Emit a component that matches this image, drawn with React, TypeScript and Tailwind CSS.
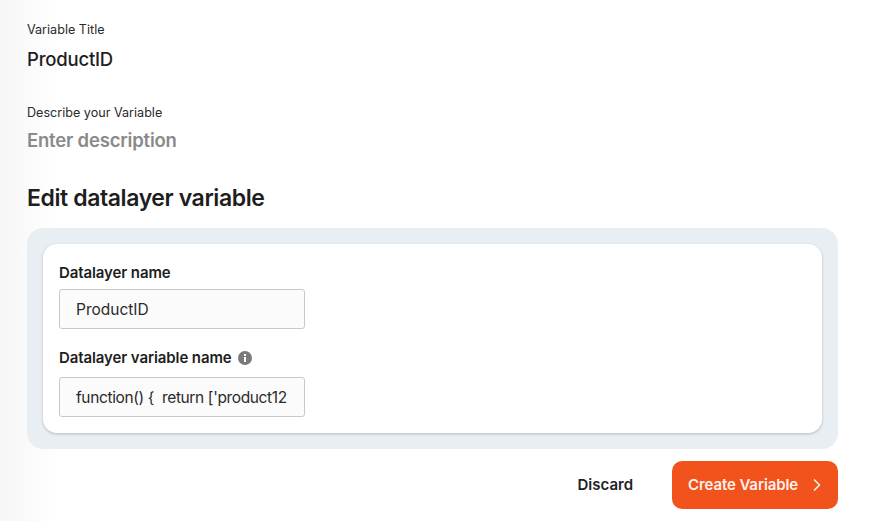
import { ChevronRight } from "lucide-react";

const App = () => {
  return (
    <div className="h-[521px] w-[882px] overflow-hidden bg-linear-to-r from-[#f6f6f6] to-white to-[60px] pl-[27px] pr-[44px] pt-[21px] font-['Inter',sans-serif] text-[#1e1e1e]">
      <p className="h-[17px] text-[12.6px] leading-[17px] text-[#2a2a2a]">Variable Title</p>
      <p className="mt-[9px] h-[24px] text-[18.5px] font-medium leading-[24px] tracking-[-0.2px]">ProductID</p>

      <p className="mt-[33px] h-[17px] text-[12.6px] leading-[17px] text-[#2a2a2a]">Describe your Variable</p>
      <p className="mt-[7px] h-[24px] text-[18.5px] font-semibold leading-[24px] tracking-[-0.2px] text-[#8a8a8a]">Enter description</p>

      <h2 className="mt-[31px] h-[30px] text-[23px] font-semibold leading-[30px] tracking-[-0.4px]">Edit datalayer variable</h2>

      <div className="mt-[15px] rounded-[16px] bg-[#e9eef2] p-[16px]">
        <div className="h-[189px] rounded-[14px] bg-white px-[16px] pt-[20px] shadow-[0_1px_3px_rgba(0,0,0,0.22)]">
          <label className="block h-[17px] text-[15px] font-semibold leading-[17px] tracking-[-0.1px]">Datalayer name</label>
          <div className="mt-[8px] flex h-[40px] w-[246px] items-center rounded-[3px] border border-[#c9c9c9] bg-[#fbfbfb] pl-[16px] pt-[2px] text-[15.5px] text-[#2a2a2a]">
            ProductID
          </div>
          <div className="mt-[20px] flex h-[17px] items-center gap-[6px]">
            <label className="text-[15px] font-semibold leading-[17px] tracking-[-0.1px]">Datalayer variable name</label>
            <svg width="14" height="14" viewBox="0 0 14 14">
              <circle cx="7" cy="7" r="7" fill="#7a7a7a" />
              <rect x="6" y="6" width="2" height="5" fill="#fff" />
              <rect x="6" y="3" width="2" height="2" fill="#fff" />
            </svg>
          </div>
          <div className="mt-[11px] flex h-[40px] w-[246px] items-center overflow-hidden whitespace-pre rounded-[3px] border border-[#c9c9c9] bg-[#fbfbfb] pl-[16px] pt-[2px] text-[15.5px] tracking-[-0.37px] text-[#2a2a2a]">
            {"function() {  return ['product12"}
          </div>
        </div>
      </div>

      <div className="mt-[12px] flex items-center justify-end">
        <button className="mr-[39px] text-[15px] font-semibold text-[#1e2228]">Discard</button>
        <button className="flex h-[48px] w-[166px] items-center rounded-[10px] bg-[#f2521c] pl-[16px] text-[15px] font-semibold tracking-[-0.1px] text-[#fdf1ec]">
          Create Variable
          <ChevronRight className="ml-[9px] h-[20px] w-[20px]" strokeWidth={2} />
        </button>
      </div>
    </div>
  );
};

export default App;
